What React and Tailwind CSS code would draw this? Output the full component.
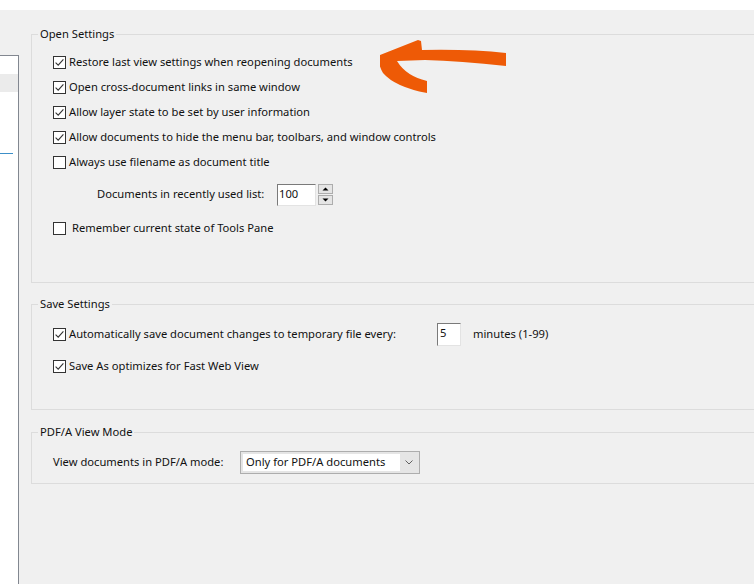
import React from "react";

function Box({ checked }) {
  return (
    <svg width="13" height="13" viewBox="0 0 13 13" className="shrink-0">
      <rect x="0.5" y="0.5" width="12" height="12" fill="#ffffff" stroke="#333333" />
      {checked && (
        <path d="M2.6 6.6 L5.2 9.2 L10.4 3.4" fill="none" stroke="#333333" strokeWidth="1.1" />
      )}
    </svg>
  );
}

function Row({ checked, children, gap = "gap-[3px]", className = "" }) {
  return (
    <div className={`flex items-center h-[25px] ${gap} ${className}`}>
      <Box checked={checked} />
      <span>{children}</span>
    </div>
  );
}

function Group({ title, className = "", children }) {
  return (
    <fieldset className="border border-r-0 border-[#dcdcdc] mr-[-4px]">
      <legend className="ml-[6px] px-[2px] leading-[16px]">{title}</legend>
      <div className={`pl-[21px] ${className}`}>{children}</div>
    </fieldset>
  );
}

function Spinner() {
  return (
    <div className="flex flex-col gap-[1px] ml-[2px]">
      <div className="w-[15px] h-[10px] border border-[#adadad] bg-[#e5e5e5] flex items-center justify-center">
        <svg width="7" height="4" viewBox="0 0 7 4"><path d="M0.5 3.5 L3.5 0.5 L6.5 3.5 Z" fill="#000" /></svg>
      </div>
      <div className="w-[15px] h-[10px] border border-[#adadad] bg-[#e5e5e5] flex items-center justify-center">
        <svg width="7" height="4" viewBox="0 0 7 4"><path d="M0.5 0.5 L3.5 3.5 L6.5 0.5 Z" fill="#000" /></svg>
      </div>
    </div>
  );
}

export default function App() {
  return (
    <div
      className="w-[754px] h-[584px] bg-[#f0f0f0] overflow-hidden flex flex-col text-[11.2px] text-[#111]"
      style={{ fontFamily: '"Noto Sans", "Open Sans", sans-serif' }}
    >
      <div className="h-[10px] bg-white shrink-0" />
      <div className="flex flex-1 min-h-0">
        <div className="w-[19px] mt-[45px] bg-white border-t border-r border-[#828790] flex flex-col shrink-0">
          <div className="h-[18px]" />
          <div className="h-[18px] bg-[#ebebeb]" />
          <div className="h-[61px]" />
          <div className="h-[1px] w-[13px] bg-[#3c8fc8]" />
        </div>
        <div className="flex-1 pl-[12px] flex flex-col">
          <div className="mt-[16px]">
            <Group title="Open Settings" className="pt-[8px] pb-[41px]">
              <div className="relative">
                <Row checked>Restore last view settings when reopening documents</Row>
                <svg
                  className="absolute left-[327px] top-[-12px]"
                  width="130"
                  height="60"
                  viewBox="380 38 130 60"
                >
                  <path
                    d="M380 55 L418 40 L421 41 L422 50 Q470 49 506 53 L506 66 Q460 61 425 60 L397 61 Q406 76 427 81 L427 93 Q395 87 383 73 Q377 63 380 55 Z"
                    fill="#ee5a06"
                  />
                </svg>
              </div>
              <Row checked>Open cross-document links in same window</Row>
              <Row checked>Allow layer state to be set by user information</Row>
              <Row checked>Allow documents to hide the menu bar, toolbars, and window controls</Row>
              <Row checked={false}>Always use filename as document title</Row>
              <div className="flex items-center h-[25px] mt-[7px] pl-[44px]">
                <span className="w-[180px]">Documents in recently used list:</span>
                <div className="w-[39px] h-[22px] bg-white border border-t-[#7a7a7a] border-l-[#7a7a7a] border-r-[#e3e3e3] border-b-[#e3e3e3] flex items-start pt-[2px] pl-[1px] leading-[14px]">
                  100
                </div>
                <Spinner />
              </div>
              <Row checked={false} gap="gap-[6px]" className="mt-[9px]">
                Remember current state of Tools Pane
              </Row>
            </Group>
          </div>

          <div className="mt-[13px]">
            <Group title="Save Settings" className="pt-[10px] pb-[30px]">
              <div className="flex items-center h-[25px]">
                <div className="flex items-center gap-[3px] w-[384px]">
                  <Box checked />
                  <span>Automatically save document changes to temporary file every:</span>
                </div>
                <div className="w-[24px] h-[23px] bg-white border border-t-[#7a7a7a] border-l-[#7a7a7a] border-r-[#e3e3e3] border-b-[#e3e3e3] flex items-start pt-[2px] pl-[2px] leading-[14px]">
                  5
                </div>
                <span className="ml-[12px]">minutes (1-99)</span>
              </div>
              <Row checked className="mt-[7px]">Save As optimizes for Fast Web View</Row>
            </Group>
          </div>

          <div className="mt-[14px]">
            <Group title="PDF/A View Mode" className="pt-[10px] pb-[9px]">
              <div className="flex items-center h-[24px]">
                <span className="w-[187px]">View documents in PDF/A mode:</span>
                <div className="w-[180px] h-[23px] border border-[#adadad] bg-[#e5e5e5] flex items-center p-[2px]">
                  <div className="w-[157px] h-full bg-white flex items-center pl-[3px]">
                    Only for PDF/A documents
                  </div>
                  <div className="flex-1 flex items-center justify-center">
                    <svg width="8" height="5" viewBox="0 0 8 5">
                      <path d="M0.5 0.5 L4 4 L7.5 0.5" fill="none" stroke="#606060" strokeWidth="1" />
                    </svg>
                  </div>
                </div>
              </div>
            </Group>
          </div>
        </div>
      </div>
    </div>
  );
}
